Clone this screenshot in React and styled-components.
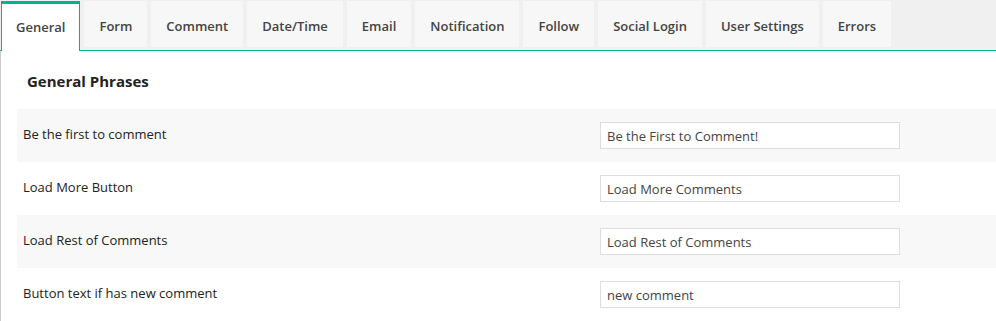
import React from 'react'
import styled, { createGlobalStyle } from 'styled-components'

const GlobalStyle = createGlobalStyle`
  * { box-sizing: border-box; }
  body {
    margin: 0;
    background: #fff;
    font-family: "Open Sans", "Noto Sans", sans-serif;
    color: #222;
  }
`;

const green = '#00b38f';

const TabBar = styled.div`
  display: flex;
  align-items: flex-start;
  gap: 4px;
  height: 51px;
  padding: 1px 0 0 1px;
  background: #f0f0f0;
  border-bottom: 1px solid ${green};
`;

const Tab = styled.div`
  height: ${({ active }) => (active ? '50px' : '46px')};
  padding: ${({ active }) => (active ? '14px 14px 0' : '16px 15px 0')};
  background: ${({ active }) => (active ? '#fff' : '#f7f7f7')};
  border: ${({ active }) => (active ? `1px solid ${green}` : 'none')};
  border-top-width: ${({ active }) => (active ? '3px' : '0')};
  border-bottom: none;
  font-size: 13px;
  font-weight: 600;
  line-height: 18px;
  color: #444;
  white-space: nowrap;
`;

const Panel = styled.div`
  border-left: 1px solid #ccc;
  padding: 0 0 0 16px;
`;

const Heading = styled.h3`
  margin: 0;
  padding: 20px 10px 0;
  height: 58px;
  font-size: 15px;
  font-weight: 700;
  color: #222;
`;

const Row = styled.div`
  display: grid;
  grid-template-columns: 577px 300px;
  align-items: center;
  height: 53px;
  padding-left: 6px;
  background: ${({ shaded }) => (shaded ? '#f8f8f8' : '#fff')};
`;

const Label = styled.div`
  font-size: 13px;
  color: #222;
  margin-top: -3px;
`;

const Input = styled.input`
  width: 300px;
  height: 27px;
  padding: 0 6px;
  border: 1px solid #ddd;
  background: #fff;
  font-family: inherit;
  font-size: 13px;
  color: #444;
  outline: none;
`;

const tabs = ['General', 'Form', 'Comment', 'Date/Time', 'Email', 'Notification', 'Follow', 'Social Login', 'User Settings', 'Errors'];

const phrases = [
  ['Be the first to comment', 'Be the First to Comment!'],
  ['Load More Button', 'Load More Comments'],
  ['Load Rest of Comments', 'Load Rest of Comments'],
  ['Button text if has new comment', 'new comment'],
];

const App = () => {
  return (
    <>
      <GlobalStyle />
      <TabBar>
        {tabs.map((t, i) => (
          <Tab key={t} active={i === 0}>{t}</Tab>
        ))}
      </TabBar>
      <Panel>
        <Heading>General Phrases</Heading>
        {phrases.map(([label, value], i) => (
          <Row key={label} shaded={i % 2 === 0}>
            <Label>{label}</Label>
            <Input defaultValue={value} />
          </Row>
        ))}
      </Panel>
    </>
  )
}

export default App
